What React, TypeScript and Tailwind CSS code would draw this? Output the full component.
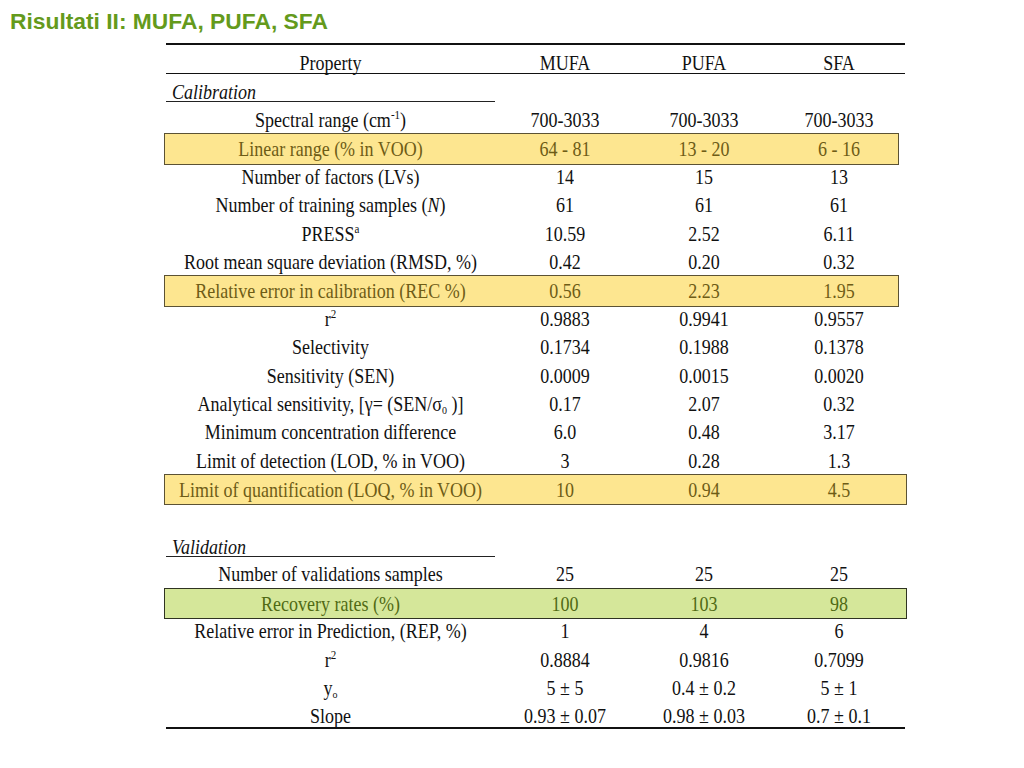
import React from "react"

type Row = {
    label: React.ReactNode
    vals: React.ReactNode[]
    hl?: "yellow" | "green"
    wide?: boolean
}

const pm = "\u00B1"

const Sup = ({ children }: { children: React.ReactNode }) => (
    <sup className="text-[11px] -top-[7px]">{children}</sup>
)

const calibration: Row[] = [
    { label: <>Spectral range (cm<Sup>-1</Sup>)</>, vals: ["700-3033", "700-3033", "700-3033"] },
    { label: "Linear range (% in VOO)", vals: ["64 - 81", "13 - 20", "6 - 16"], hl: "yellow" },
    { label: "Number of factors (LVs)", vals: ["14", "15", "13"] },
    { label: <>Number of training samples (<i>N</i>)</>, vals: ["61", "61", "61"] },
    { label: <>PRESS<Sup>a</Sup></>, vals: ["10.59", "2.52", "6.11"] },
    { label: "Root mean square deviation (RMSD, %)", vals: ["0.42", "0.20", "0.32"] },
    { label: "Relative error in calibration (REC %)", vals: ["0.56", "2.23", "1.95"], hl: "yellow" },
    { label: <>r<Sup>2</Sup></>, vals: ["0.9883", "0.9941", "0.9557"] },
    { label: "Selectivity", vals: ["0.1734", "0.1988", "0.1378"] },
    { label: "Sensitivity (SEN)", vals: ["0.0009", "0.0015", "0.0020"] },
    { label: <>Analytical sensitivity, [γ= (SEN/σ<sub className="text-[10px]">0</sub> )]</>, vals: ["0.17", "2.07", "0.32"] },
    { label: "Minimum concentration difference", vals: ["6.0", "0.48", "3.17"] },
    { label: "Limit of detection (LOD, % in VOO)", vals: ["3", "0.28", "1.3"] },
    { label: "Limit of quantification (LOQ, % in VOO)", vals: ["10", "0.94", "4.5"], hl: "yellow", wide: true },
]

const validation: Row[] = [
    { label: "Number of validations samples", vals: ["25", "25", "25"] },
    { label: "Recovery rates (%)", vals: ["100", "103", "98"], hl: "green", wide: true },
    { label: "Relative error in Prediction, (REP, %)", vals: ["1", "4", "6"] },
    { label: <>r<Sup>2</Sup></>, vals: ["0.8884", "0.9816", "0.7099"] },
    { label: <>y<sub className="text-[10px]">o</sub></>, vals: [`5 ${pm} 5`, `0.4 ${pm} 0.2`, `5 ${pm} 1`] },
    { label: "Slope", vals: [`0.93 ${pm} 0.07`, `0.98 ${pm} 0.03`, `0.7 ${pm} 0.1`] },
]

// shift sposta il testo un po' in basso come nella slide originale
const Cells = ({ row, shift = "translate-y-[4px]" }: { row: Row; shift?: string }) => (
    <div className={`grid grid-cols-[329px_140px_138px_132px] h-full items-center ${shift}`}>
        <div className="text-center whitespace-nowrap">
            <span className="inline-block scale-y-[1.12]">{row.label}</span>
        </div>
        {row.vals.map((v, i) => (
            <div key={i} className="text-center whitespace-nowrap">
                <span className="inline-block scale-y-[1.12]">{v}</span>
            </div>
        ))}
    </div>
)

const TableRow = ({ row }: { row: Row }) => {
    if (!row.hl) {
        return (
            <div className="h-[28.4px]">
                <Cells row={row} />
            </div>
        )
    }
    // righe evidenziate: box un po' più alto della riga, bordo scuro
    const colors =
        row.hl === "yellow"
            ? "bg-[#fde690] border-[#5b5234] text-[#6e5c16]"
            : "bg-[#d5e79a] border-[#2f3322] text-[#506a14]"
    return (
        <div
            className={`h-[31.4px] mt-[2.5px] -mb-[5.5px] -ml-[2px] pl-[1px] border ${colors} ${row.wide ? "w-[743px]" : "w-[735px]"}`}
        >
            <Cells row={row} shift="translate-y-[1px]" />
        </div>
    )
}

const SectionTitle = ({ children }: { children: React.ReactNode }) => (
    <div className="h-[28.4px] flex items-end">
        <div className="w-[329px] border-b border-[#222] pl-[6px] italic leading-[18px]">
            <span className="inline-block scale-y-[1.12]">{children}</span>
        </div>
    </div>
)

export default function App() {
    return (
        <div className="w-[1024px] h-[768px] bg-white overflow-hidden relative">
            <h1
                className="pl-[10px] pt-[10px] text-[22.8px] leading-[22px] font-bold text-[#649a1c]"
                style={{ fontFamily: "'Liberation Sans', Arial, sans-serif" }}
            >
                Risultati II: MUFA, PUFA, SFA
            </h1>

            <div
                className="ml-[166px] mt-[11px] w-[739px] text-[18px] text-[#111]"
                style={{ fontFamily: "'Liberation Serif', 'Times New Roman', serif" }}
            >
                <div className="border-t-2 border-b border-[#111] h-[31px]">
                    <Cells row={{ label: "Property", vals: ["MUFA", "PUFA", "SFA"] }} />
                </div>

                <SectionTitle>Calibration</SectionTitle>
                {calibration.map((r, i) => (
                    <TableRow key={i} row={r} />
                ))}

                <div className="h-[28.4px]" />

                <SectionTitle>Validation</SectionTitle>
                {validation.map((r, i) => (
                    <TableRow key={i} row={r} />
                ))}

                <div className="border-t-2 border-[#111]" />
            </div>
        </div>
    )
}
